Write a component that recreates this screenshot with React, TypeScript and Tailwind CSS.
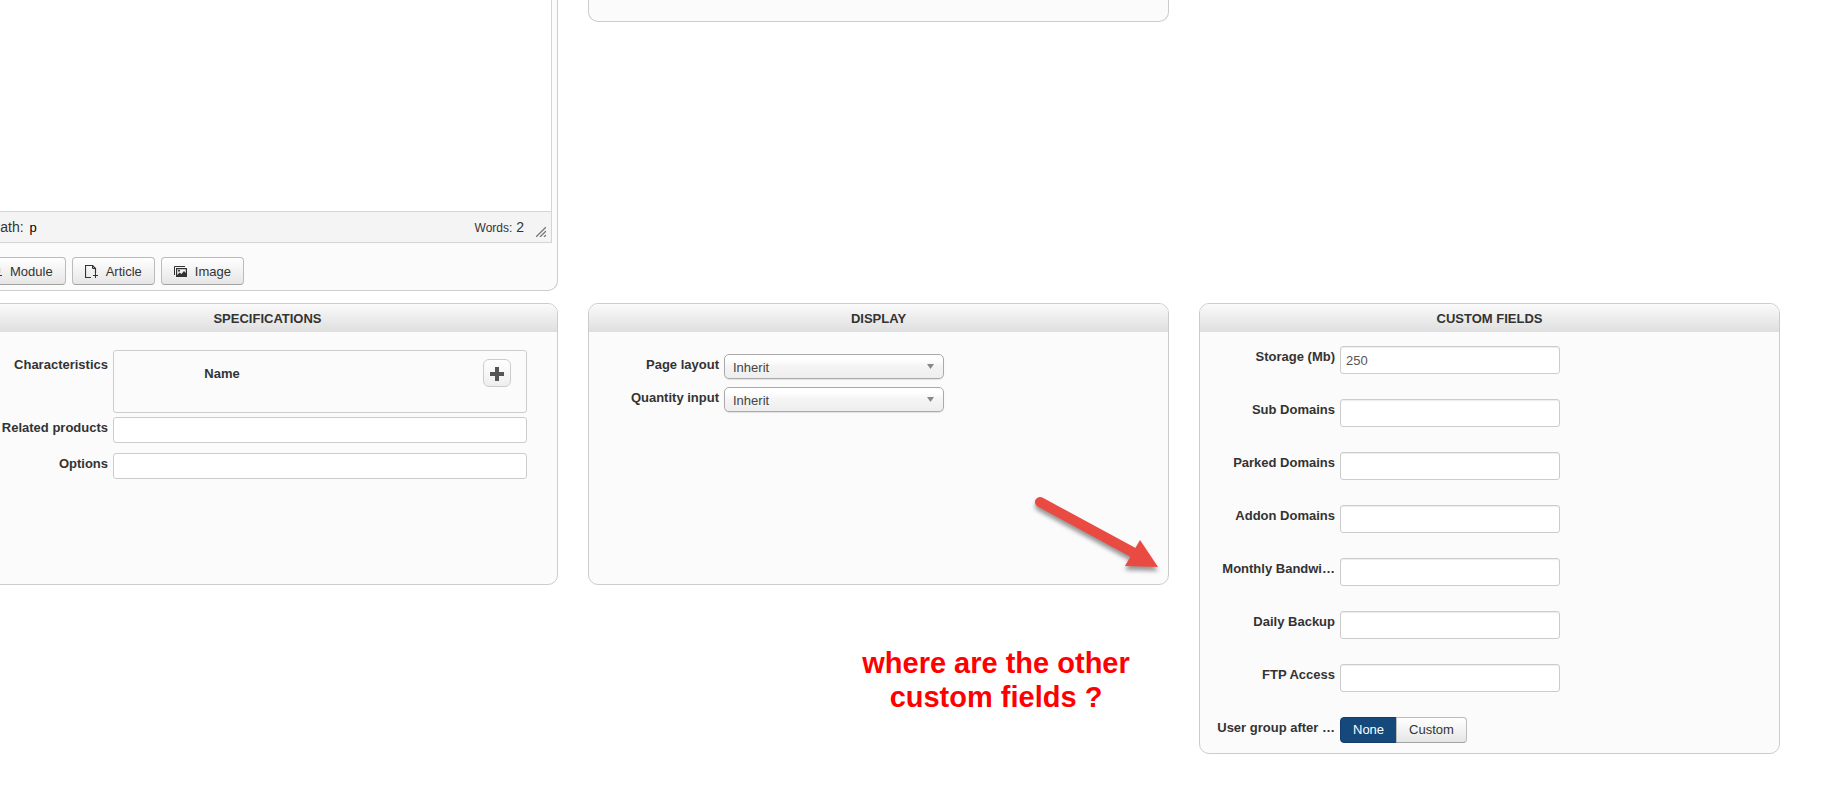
import { useState } from 'react';
import type { ReactNode } from 'react';

const customFields = [
    { id: 'storage', label: 'Storage (Mb)', value: '250' },
    { id: 'sub-domains', label: 'Sub Domains', value: '' },
    { id: 'parked-domains', label: 'Parked Domains', value: '' },
    { id: 'addon-domains', label: 'Addon Domains', value: '' },
    { id: 'bandwidth', label: 'Monthly Bandwi…', value: '' },
    { id: 'daily-backup', label: 'Daily Backup', value: '' },
    { id: 'ftp-access', label: 'FTP Access', value: '' },
];

const labelClass = 'w-[120px] shrink-0 whitespace-nowrap pt-0.5 text-right font-bold';
const inputClass = 'rounded-[3px] border border-[#ccc] bg-white px-[5px] text-[#555] outline-none';
const buttonClass = 'flex h-7 items-center gap-2 rounded border border-[#bbb] border-b-[#a2a2a2] bg-linear-to-b from-white to-[#e6e6e6] px-3 pt-px';

function FileAddIcon() {
    return (
        <svg width="13" height="14" viewBox="0 0 13 14" fill="none" stroke="#333" aria-hidden="true">
            <path d="M6 12.5H.5V.5H7.5L10.5 3.500V8" strokeWidth="1.200" />
            <path d="M7.500 .5V3.500H10.500" />
            <path d="M10.5 8V13M8 10.5H13" />
        </svg>
    );
}

function PictureIcon() {
    return (
        <svg width="13" height="12" viewBox="0 0 13 12" aria-hidden="true">
            <path d="M.5 9V.5H11" fill="none" stroke="#333" />
            <path fillRule="evenodd" fill="#333" d="M2 2H13V11H2ZM3.200 3.200V9L5.500 6.500L7.500 8L10 5L11.800 7V3.200Z" />
            <circle cx="5" cy="4.800" r="1" fill="#333" />
        </svg>
    );
}

function Panel({ title, className = '', children }: { title: string; className?: string; children: ReactNode }) {
    return (
        <section className={`relative overflow-hidden rounded-[10px] border border-[#ccc] bg-[#fbfbfb] ${className}`}>
            <h2 className="h-7 bg-linear-to-b from-[#fafafa] to-[#dfdfdf] text-center leading-[30px] font-bold">{title}</h2>
            {children}
        </section>
    );
}

function SelectField({ id, label }: { id: string; label: string }) {
    return (
        <div className="flex items-start gap-[5px]">
            <label htmlFor={id} className={labelClass}>{label}</label>
            <div className="relative">
                <select
                    id={id}
                    className="block h-[25px] w-[220px] appearance-none rounded-[5px] border border-[#aaa] bg-linear-to-b from-white from-20% via-[#f4f4f4] via-50% to-[#eee] px-2 pt-0.5 text-[#444] shadow-[0_1px_1px_rgba(0,0,0,0.1)] outline-none"
                >
                    <option>Inherit</option>
                </select>
                <svg className="pointer-events-none absolute top-[10px] right-[10px]" width="7" height="5" viewBox="0 0 7 5" aria-hidden="true">
                    <path d="M0 0H7L3.500 5Z" fill="#888" />
                </svg>
            </div>
        </div>
    );
}

function Editor() {
    return (
        <section className="flex h-[291px] flex-col rounded-b-[10px] border border-t-0 border-[#ccc] bg-[#fbfbfb] px-[5px] pb-[5px]">
            <div className="flex flex-1 flex-col border border-t-0 border-[#d5d5d5] bg-white">
                <textarea aria-label="Description" className="block w-full flex-1 resize-none outline-none" />
                <div className="relative flex h-[31px] items-center justify-between border-t border-[#d5d5d5] bg-[#f4f4f4] pr-[27px] pl-[7px] text-sm">
                    <div>Path: <a href="#" className="ml-0.5 text-[13px] text-black">p</a></div>
                    <div><span className="text-xs">Words:</span> 2</div>
                    <svg className="absolute right-[5px] bottom-[5px]" width="10" height="10" viewBox="0 0 10 10" stroke="#777" strokeWidth="1.300" aria-hidden="true">
                        <path d="M0 10L10 0M4 10L10 4M8 10L10 8" />
                    </svg>
                </div>
            </div>
            <div className="mt-[14px] -ml-[7px] flex gap-1.5">
                <button type="button" className={buttonClass}><FileAddIcon />Module</button>
                <button type="button" className={buttonClass}><FileAddIcon />Article</button>
                <button type="button" className={buttonClass}><PictureIcon />Image</button>
            </div>
        </section>
    );
}

export default function App() {
    const [group, setGroup] = useState('None');

    return (
        <div className="min-h-screen overflow-hidden bg-white font-['Liberation_Sans',Arial,sans-serif] text-[13px] leading-[18px] text-[#333]">
            <main className="-ml-[23px] mr-[45px] grid grid-cols-3 items-start gap-x-[30px] gap-y-3">
                <Editor />
                <section className="h-[22px] rounded-b-[10px] border border-t-0 border-[#ccc] bg-[#fbfbfb]" />
                <div />

                <Panel title="SPECIFICATIONS" className="h-[282px]">
                    <div className="mt-[18px] mr-[30px] ml-[10px] flex items-start gap-[5px]">
                        <div className={`${labelClass} mt-1`}>Characteristics</div>
                        <div className="h-[63px] flex-1 rounded-[3px] border border-[#ccc] pt-2 pr-[15px]">
                            <table className="w-full">
                                <thead>
                                    <tr>
                                        <th scope="col" className="w-[216px] p-0 pt-0.5">Name</th>
                                        <th scope="col" className="p-0">
                                            <button type="button" aria-label="Add characteristic" className="ml-auto flex size-7 items-center justify-center rounded-md border border-[#ccc] bg-linear-to-b from-white to-[#eee] pt-px">
                                                <svg width="14" height="14" viewBox="0 0 14 14" stroke="#555" strokeWidth="4" aria-hidden="true">
                                                    <path d="M7 0V14M0 7H14" />
                                                </svg>
                                            </button>
                                        </th>
                                    </tr>
                                </thead>
                            </table>
                        </div>
                    </div>
                    <div className="mt-1 mr-[30px] ml-[10px] flex items-start gap-[5px]">
                        <label htmlFor="related" className={labelClass}>Related products</label>
                        <input id="related" className={`${inputClass} h-[26px] min-w-0 flex-1`} />
                    </div>
                    <div className="mt-[10px] mr-[30px] ml-[10px] flex items-start gap-[5px]">
                        <label htmlFor="options" className={labelClass}>Options</label>
                        <input id="options" className={`${inputClass} h-[26px] min-w-0 flex-1`} />
                    </div>
                </Panel>

                <div>
                    <Panel title="DISPLAY" className="h-[282px]">
                        <div className="mt-[22px] ml-[10px] flex flex-col gap-2">
                            <SelectField id="page-layout" label="Page layout" />
                            <SelectField id="quantity-input" label="Quantity input" />
                        </div>
                        <svg className="absolute right-1 bottom-2 drop-shadow-[0_4px_2px_rgba(0,0,0,0.4)]" width="130" height="80" viewBox="0 0 130 80" fill="#e94b42" aria-hidden="true">
                            <path d="M6 6L102 58" stroke="#e94b42" strokeWidth="10" strokeLinecap="round" />
                            <path d="M106 44L124 71L91 70Z" />
                        </svg>
                    </Panel>
                    <p className="mt-[61px] ml-auto w-[346px] text-center text-[29px] leading-[34px] font-bold text-[#f00]">
                        where are the other<br />custom fields ?
                    </p>
                </div>

                <Panel title="CUSTOM FIELDS" className="pb-[10px]">
                    <div className="mt-[14px] ml-[15px] flex flex-col gap-[25px]">
                        {customFields.map((field) => (
                            <div key={field.id} className="flex items-start gap-[5px]">
                                <label htmlFor={field.id} className={labelClass}>{field.label}</label>
                                <input
                                    id={field.id}
                                    defaultValue={field.value}
                                    className={`${inputClass} h-7 w-[220px] shadow-[inset_0_1px_1px_rgba(0,0,0,0.075)]`}
                                />
                            </div>
                        ))}
                        <div className="flex items-start gap-[5px]">
                            <div id="user-group" className={labelClass}>User group after …</div>
                            <div role="group" aria-labelledby="user-group" className="flex">
                                {['None', 'Custom'].map((name) => (
                                    <button
                                        key={name}
                                        type="button"
                                        aria-pressed={group === name}
                                        onClick={() => setGroup(name)}
                                        className={`flex h-[26px] items-center border px-3 first:rounded-l last:-ml-px last:rounded-r ${group === name
                                            ? 'border-[#123d6b] bg-[#15497c] text-white'
                                            : 'border-[#bbb] border-b-[#a2a2a2] bg-linear-to-b from-white to-[#e6e6e6]'
                                        }`}
                                    >
                                        {name}
                                    </button>
                                ))}
                            </div>
                        </div>
                    </div>
                </Panel>
            </main>
        </div>
    );
}
